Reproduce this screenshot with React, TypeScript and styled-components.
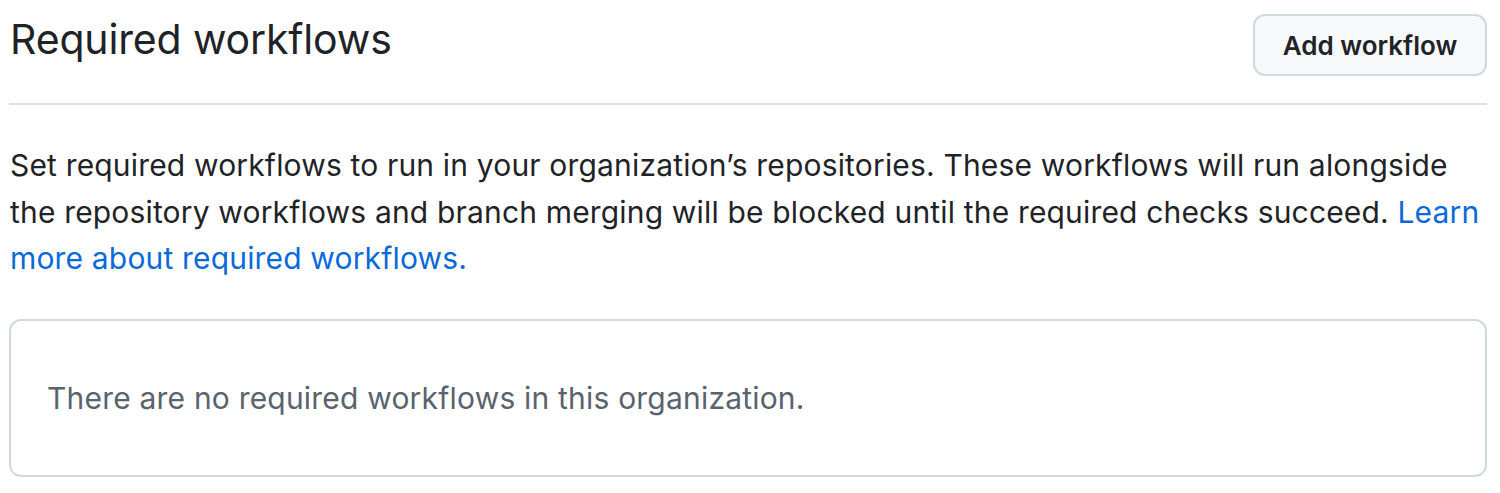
import React from "react";
import styled, { createGlobalStyle } from "styled-components";

const Global = createGlobalStyle`
  html, body { margin: 0; padding: 0; background: #ffffff; }
  body { font-family: Inter, "Liberation Sans", Arial, sans-serif; color: #1f2328; }
`;

const Page = styled.div`
  padding: 14px 13px 0 9px;
  display: flex;
  flex-direction: column;
`;

const Subhead = styled.div`
  display: flex;
  align-items: flex-start;
  justify-content: space-between;
  padding-bottom: 27px;
  border-bottom: 2px solid #d8dee4;
`;

const Heading = styled.h2`
  margin: 0;
  padding-left: 1px;
  font-size: 41px;
  font-weight: 400;
  line-height: 50px;
  letter-spacing: -0.15px;
  color: #1f2328;
`;

const Button = styled.button`
  height: 62px;
  width: 234px;
  padding: 0;
  border: 2px solid #d1d9e0;
  border-radius: 12px;
  background: #f6f8fa;
  color: #1f2328;
  font-family: inherit;
  font-size: 26px;
  font-weight: 600;
  cursor: pointer;
`;

const Description = styled.p`
  margin: 37px 0 0 1px;
  font-size: 30px;
  line-height: 46.5px;
  letter-spacing: 0.17px;
  color: #1f2328;
`;

const Link = styled.a`
  color: #0969da;
  text-decoration: none;
`;

const Blankslate = styled.div`
  margin-top: 37px;
  height: 158px;
  border: 2px solid #d1d9e0;
  border-radius: 12px;
  display: flex;
  align-items: center;
  padding: 0 36px;
  box-sizing: border-box;
`;

const EmptyText = styled.p`
  margin: 0;
  font-size: 30px;
  letter-spacing: 0.2px;
  color: #59636e;
`;

export default function App() {
  return (
    <>
      <Global />
      <Page>
        <Subhead>
          <Heading>Required workflows</Heading>
          <Button>Add workflow</Button>
        </Subhead>
        <Description>
          Set required workflows to run in your organization’s repositories. These workflows will run alongside
          the repository workflows and branch merging will be blocked until the required checks succeed.{" "}
          <Link href="#">Learn more about required workflows.</Link>
        </Description>
        <Blankslate>
          <EmptyText>There are no required workflows in this organization.</EmptyText>
        </Blankslate>
      </Page>
    </>
  );
}
